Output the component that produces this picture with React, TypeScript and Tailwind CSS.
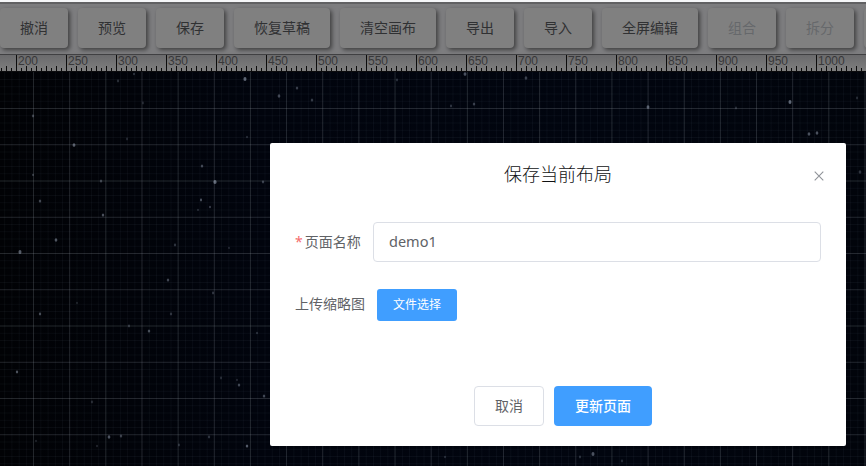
import React from "react";

const buttons: { label: string; width: string; disabled?: boolean }[] = [
  { label: "撤消", width: "w-[68px]" },
  { label: "预览", width: "w-[68px]" },
  { label: "保存", width: "w-[68px]" },
  { label: "恢复草稿", width: "w-[96px]" },
  { label: "清空画布", width: "w-[96px]" },
  { label: "导出", width: "w-[68px]" },
  { label: "导入", width: "w-[68px]" },
  { label: "全屏编辑", width: "w-[96px]" },
  { label: "组合", width: "w-[68px]", disabled: true },
  { label: "拆分", width: "w-[68px]", disabled: true },
  { label: "", width: "w-[68px]" },
];

// x, y, radius, opacity
const stars: [number, number, number, number][] = [
  [245, 79, 1.7, 0.5], [279, 96, 1.5, 0.35], [118, 81, 1.3, 0.22], [143, 103, 1.3, 0.16], [134, 74, 1.1, 0.25],
  [33, 116, 1.3, 0.3], [74, 145, 1.6, 0.45], [127, 139, 1.2, 0.18], [202, 166, 1.4, 0.35], [215, 182, 1.8, 0.5],
  [33, 175, 1, 0.3], [101, 181, 1.4, 0.3], [40, 201, 1.4, 0.35], [201, 200, 1.2, 0.4], [210, 207, 1.1, 0.3],
  [198, 210, 1, 0.22], [103, 215, 1.4, 0.4], [56, 240, 1.5, 0.42], [20, 252, 1.7, 0.45], [175, 245, 1.3, 0.25],
  [229, 248, 1, 0.2], [168, 280, 1.4, 0.35], [247, 137, 1.1, 0.2], [263, 182, 1.3, 0.3], [40, 314, 1.3, 0.38],
  [171, 314, 1.3, 0.25], [149, 331, 1.4, 0.38], [129, 326, 1.2, 0.25], [17, 372, 1.3, 0.42], [77, 303, 1, 0.18],
  [239, 385, 1.4, 0.35], [237, 380, 1, 0.2], [264, 396, 1.4, 0.35], [221, 378, 1.2, 0.2], [257, 333, 1.1, 0.22],
  [92, 402, 1.3, 0.2], [109, 437, 1.5, 0.42], [121, 436, 1.4, 0.3], [97, 446, 1.1, 0.18], [209, 437, 1.3, 0.25],
  [247, 446, 1.4, 0.45], [179, 445, 1.2, 0.22], [36, 441, 1, 0.18], [297, 88, 1.4, 0.3], [312, 100, 1.4, 0.28],
  [397, 80, 1.2, 0.22], [465, 74, 1.6, 0.4], [474, 104, 1.4, 0.3], [451, 106, 1.2, 0.25], [526, 78, 1.5, 0.3],
  [648, 107, 1.6, 0.45], [790, 102, 1.7, 0.5], [736, 108, 1.2, 0.2], [857, 98, 1.2, 0.2], [809, 134, 1.5, 0.4],
  [817, 133, 1.5, 0.4], [860, 172, 1.5, 0.25], [593, 454, 1.7, 0.4], [580, 457, 1.2, 0.22], [445, 457, 1.1, 0.2],
  [622, 461, 1.3, 0.2], [213, 293, 1.2, 0.25],
];

const lines = (origin: number, step: number, limit: number) =>
  Array.from({ length: Math.ceil((limit - origin) / step) }, (_, i) => origin + i * step);

function Toolbar() {
  return (
    <header className="h-[54px] w-full overflow-hidden border-t-2 border-[#f5f6f8] bg-[#7d7d7f]">
      <div className="flex h-full gap-[10px] border-t-2 border-[#616163] pt-1">
        {buttons.map((b, i) => (
          <button
            key={i}
            className={`${b.width} ${b.disabled ? "text-[#66686b]" : "text-[#303133]"} h-10 shrink-0 rounded-[4px] bg-[#808080] text-[14px] leading-none shadow-[2px_2px_4px_rgba(0,0,0,0.5)]`}
          >
            {b.label}
          </button>
        ))}
      </div>
    </header>
  );
}

function Ruler() {
  return (
    <svg className="block h-[18px] w-full shrink-0" width="866" height="18" shapeRendering="crispEdges">
      <defs>
        <linearGradient id="ruler" x1="0" y1="0" x2="0" y2="1">
          <stop offset="0" stopColor="#69696b" />
          <stop offset="1" stopColor="#7f7f7f" />
        </linearGradient>
      </defs>
      <rect width="866" height="18" fill="url(#ruler)" />
      <rect width="866" height="1" fill="#404042" />
      {lines(1, 5, 866).map((x) => {
        const major = (x - 16) % 50 === 0;
        return <rect key={x} x={x} y={major ? 1 : (x - 16) % 10 === 0 ? 12 : 14} width="1" height="17" fill="#0c0c0c" />;
      })}
      <rect y="17" width="866" height="1" fill="#0c0c0e" />
      {lines(16, 50, 866).slice(0, 17).map((x, i) => (
        <text key={x} x={x + 2} y="11" fontSize="12" fill="#38383a" fontFamily="Liberation Sans, Arial, sans-serif">
          {200 + i * 50}
        </text>
      ))}
    </svg>
  );
}

function Canvas() {
  return (
    <svg className="block w-full flex-1" viewBox="0 72 866 394" width="866" height="394">
      <defs>
        <linearGradient id="space">
          <stop offset="0" stopColor="#010205" />
          <stop offset="0.3" stopColor="#01040d" />
          <stop offset="0.7" stopColor="#01050f" />
          <stop offset="1" stopColor="#01040b" />
        </linearGradient>
      </defs>
      <rect y="72" width="866" height="394" fill="url(#space)" />
      <g fill="#8b95a8" fillOpacity="0.065">
        {lines(4.2, 7.23, 866).map((x) => <rect key={x} x={x} y="72" width="1" height="394" />)}
        {lines(79, 7.25, 466).map((y) => <rect key={y} x="0" y={y} width="866" height="1" />)}
      </g>
      <g fill="#a0a5ad" fillOpacity="0.18">
        {lines(33, 36.15, 866).map((x) => <rect key={x} x={x} y="72" width="1" height="394" />)}
        {lines(108, 36.25, 466).map((y) => <rect key={y} x="0" y={y} width="866" height="1" />)}
      </g>
      {stars.map(([x, y, r, o], i) => (
        <ellipse key={i} cx={x} cy={y} rx={r * 0.9} ry={r * 1.15} fill="#b8c4d8" opacity={o} />
      ))}
    </svg>
  );
}

function SaveDialog() {
  return (
    <section role="dialog" className="absolute left-[270px] top-[143px] flex h-[303px] w-[576px] flex-col rounded-[2px] bg-white px-[25px] text-[14px] text-[#606266]">
      <div className="mt-[19px] flex h-6 items-center">
        <h1 className="flex-1 pr-[3px] text-center text-[18px] font-light leading-6 text-[#101113]">保存当前布局</h1>
        <svg className="-ml-[13px] -mr-[6px] mt-[3px] h-4 w-4" viewBox="0 0 16 16" fill="none" stroke="#909399" strokeWidth="1.1">
          <path d="M3.7 3.7 12.3 12.3M12.3 3.7 3.7 12.3" />
        </svg>
      </div>
      <div className="mt-9 flex h-10 items-center">
        <label className="w-[78px] whitespace-nowrap pb-[2px]"><span className="mr-[2px] text-[#f56c6c]">*</span>页面名称</label>
        <input readOnly value="demo1" className="h-10 w-[448px] rounded-[4px] border border-[#dcdfe6] px-[15px] pb-[3px] font-['Noto_Sans'] text-[14.5px] outline-none" />
      </div>
      <div className="mt-[27px] flex h-8 items-center">
        <label className="w-[82px] pb-[3px]">上传缩略图</label>
        <button className="h-8 w-20 rounded-[3px] bg-[#409eff] text-[12px] text-white">文件选择</button>
      </div>
      <div className="mt-[65px] flex gap-[10px] pl-[179px]">
        <button className="h-10 w-[70px] rounded-[4px] border border-[#dcdfe6] pb-[2px]">取消</button>
        <button className="h-10 w-[98px] rounded-[4px] bg-[#409eff] pb-[2px] font-medium text-white">更新页面</button>
      </div>
    </section>
  );
}

export default function App() {
  return (
    <main className="relative flex h-[466px] w-[866px] flex-col overflow-hidden bg-black font-['Noto_Sans','Noto_Sans_CJK_SC',sans-serif]">
      <Toolbar />
      <Ruler />
      <Canvas />
      <SaveDialog />
    </main>
  );
}
